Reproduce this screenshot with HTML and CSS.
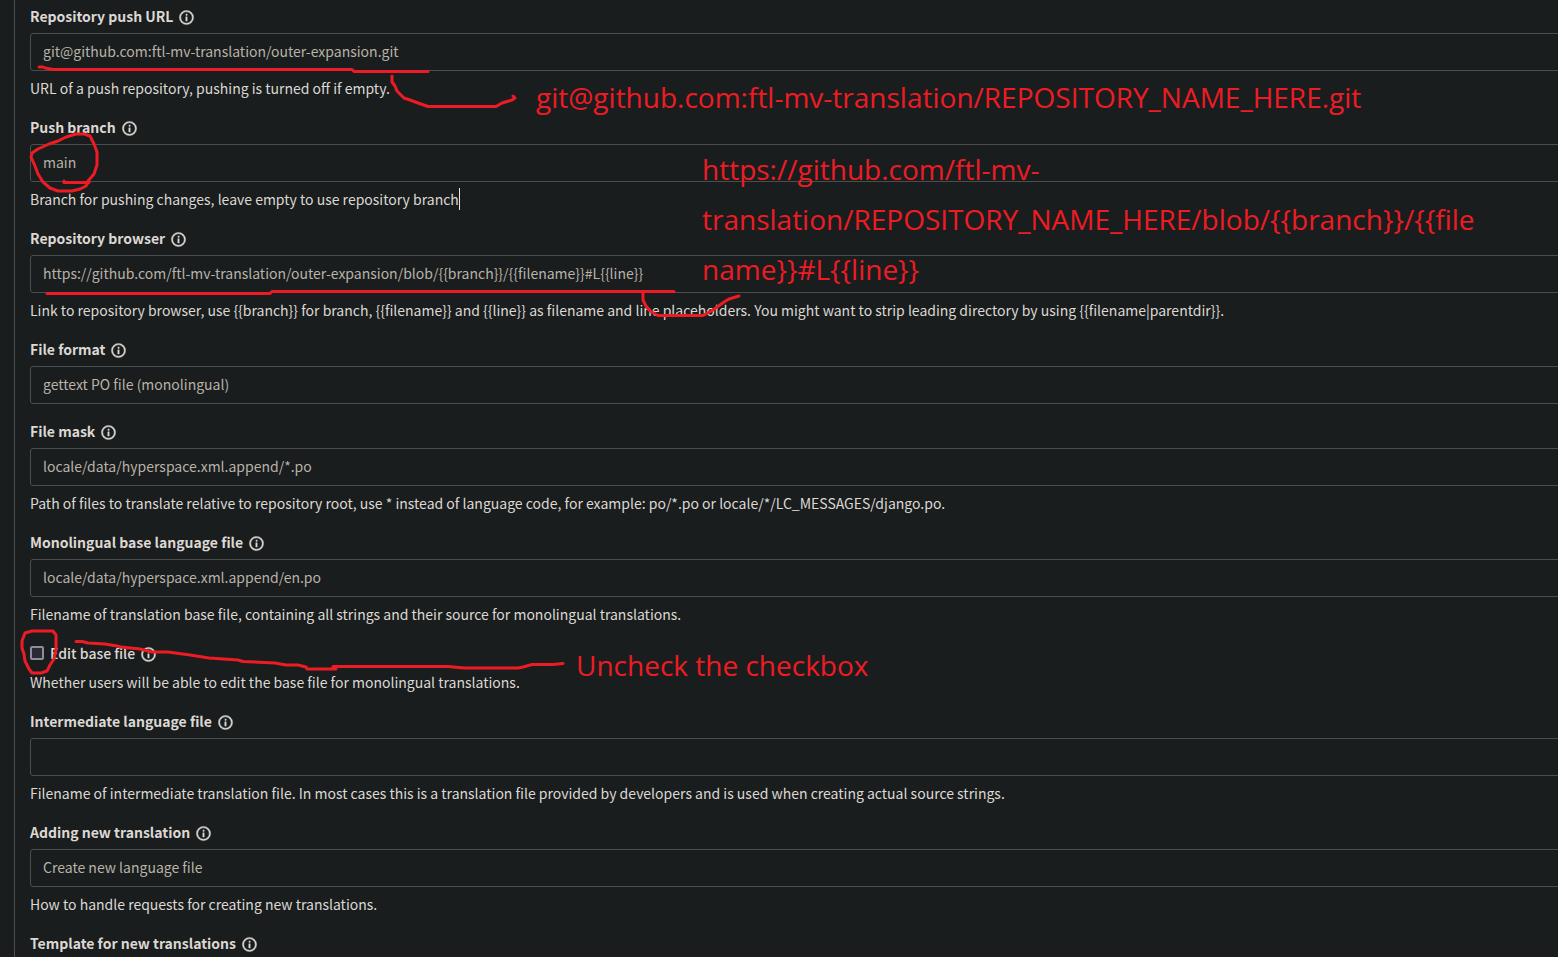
FILE: index.html
```html
<!DOCTYPE html>
<html lang="en">
<head>
<meta charset="utf-8">
<title>Component settings</title>
<link rel="stylesheet" href="styles.css">
</head>
<body>
<svg class="symbols" aria-hidden="true">
  <symbol id="info" viewBox="0 0 24 24"><path d="M11,9H13V7H11M12,20C7.59,20 4,16.41 4,12C4,7.59 7.59,4 12,4C16.41,4 20,7.59 20,12C20,16.41 16.41,20 12,20M12,2A10,10 0 0,0 2,12A10,10 0 0,0 12,22A10,10 0 0,0 22,12A10,10 0 0,0 12,2M11,17H13V11H11V17Z"/></symbol>
</svg>
<main class="page">
  <form class="panel">
    <div class="group">
      <div class="heading"><label for="push">Repository push URL</label><svg class="icon"><use href="#info"/></svg></div>
      <input class="control" id="push" type="text" value="git@github.com:ftl-mv-translation/outer-expansion.git">
      <p class="help">URL of a push repository, pushing is turned off if empty.</p>
    </div>
    <div class="group">
      <div class="heading"><label for="branch">Push branch</label><svg class="icon"><use href="#info"/></svg></div>
      <input class="control" id="branch" type="text" value="main">
      <p class="help caret">Branch for pushing changes, leave empty to use repository branch</p>
    </div>
    <div class="group">
      <div class="heading"><label for="browser">Repository browser</label><svg class="icon"><use href="#info"/></svg></div>
      <input class="control" id="browser" type="text" value="https://github.com/ftl-mv-translation/outer-expansion/blob/{{branch}}/{{filename}}#L{{line}}">
      <p class="help">Link to repository browser, use {{branch}} for branch, {{filename}} and {{line}} as filename and line placeholders. You might want to strip leading directory by using {{filename|parentdir}}.</p>
    </div>
    <div class="group">
      <div class="heading"><label for="format">File format</label><svg class="icon"><use href="#info"/></svg></div>
      <select class="control" id="format"><option>gettext PO file (monolingual)</option></select>
    </div>
    <div class="group">
      <div class="heading"><label for="mask">File mask</label><svg class="icon"><use href="#info"/></svg></div>
      <input class="control" id="mask" type="text" value="locale/data/hyperspace.xml.append/*.po">
      <p class="help">Path of files to translate relative to repository root, use * instead of language code, for example: po/*.po or locale/*/LC_MESSAGES/django.po.</p>
    </div>
    <div class="group">
      <div class="heading"><label for="base">Monolingual base language file</label><svg class="icon"><use href="#info"/></svg></div>
      <input class="control" id="base" type="text" value="locale/data/hyperspace.xml.append/en.po">
      <p class="help">Filename of translation base file, containing all strings and their source for monolingual translations.</p>
    </div>
    <div class="group">
      <div class="heading check"><input class="box" id="edit" type="checkbox"><label for="edit">Edit base file</label><svg class="icon"><use href="#info"/></svg></div>
      <p class="help">Whether users will be able to edit the base file for monolingual translations.</p>
    </div>
    <div class="group">
      <div class="heading"><label for="intermediate">Intermediate language file</label><svg class="icon"><use href="#info"/></svg></div>
      <input class="control" id="intermediate" type="text">
      <p class="help">Filename of intermediate translation file. In most cases this is a translation file provided by developers and is used when creating actual source strings.</p>
    </div>
    <div class="group">
      <div class="heading"><label for="adding">Adding new translation</label><svg class="icon"><use href="#info"/></svg></div>
      <select class="control" id="adding"><option>Create new language file</option></select>
      <p class="help">How to handle requests for creating new translations.</p>
    </div>
    <div class="group">
      <div class="heading"><span>Template for new translations</span><svg class="icon"><use href="#info"/></svg></div>
    </div>
  </form>

  <svg class="marks" viewBox="0 0 1558 957" aria-hidden="true">
    <path d="M39 67H43L45 68L53 69.500H352L354 71.500H428"/>
    <path d="M392 76V82L395 86L397 91L404 98L410 100L418 103L428 106.500H496L502 103L512 100L515 98L513 96"/>
    <path d="M64 181V182.500H89M88 181L94 174L97 165V152L94 144L90 136L84 134H76L66 137L58 141L49 144L38 149L32 153L31 157L35 166L38 174L43 182L50 188L58 191H72L80 189L86 186L89 181"/>
    <path d="M47 293.500H270L272 291.500H674"/>
    <path d="M643 292V300L646 306L650 311L658 315.500H703L713 310L724 302L729 299L739 296"/>
    <path d="M25 633L32 631H53L56 635V650L54 659L50 665L47 671L41 673H32L29 669L25 661L24 654L22 648V641L25 633"/>
    <path d="M76 641.500H82L88 643L105 644L117 646L121 647L140 649L152 652H168L190 655L209 658L238 660L243 661.500L275 663L286 665H298L306 667L307 669H336M333 666.500H448L464 668H518L523 667L532 664.500H553L563 663.500"/>
  </svg>
  <p class="note note-push">git@github.com:ftl-mv-translation/REPOSITORY_NAME_HERE.git</p>
  <p class="note note-browser">https://github.com/ftl-mv-<br>translation/REPOSITORY_NAME_HERE/blob/{{branch}}/{{file<br>name}}#L{{line}}</p>
  <p class="note note-check">Uncheck the checkbox</p>
</main>
</body>
</html>
```

FILE: styles.css
```css
* { box-sizing: border-box; }

body {
  margin: 0;
  background: #1a1d1e;
  color: #dcd8d3;
  font: 14px/24px "Noto Sans CJK SC", sans-serif;
}

.symbols { position: absolute; width: 0; height: 0; }

.page {
  position: relative;
  min-height: 100vh;
  padding-left: 14px;
  overflow: hidden;
}

.panel {
  min-height: 100vh;
  margin-right: -20px;
  padding: 4px 0 0 15px;
  border-left: 1px solid #4a4e4f;
}

.group {
  display: flex;
  flex-direction: column;
  gap: 5px;
  margin-bottom: 15px;
}

.group:last-child { margin-bottom: 0; }

.heading {
  display: flex;
  align-items: center;
  gap: 5px;
  height: 24px;
  font-weight: 700;
}

.icon {
  width: 17px;
  height: 17px;
  margin-top: 2px;
  fill: currentColor;
  stroke: currentColor;
  stroke-width: 0.6;
}

.control {
  width: 100%;
  height: 38px;
  margin: 0;
  padding: 0 12px 2px;
  border: 1px solid #4a4e4f;
  border-radius: 3px;
  background: transparent;
  color: #b8b2a8;
  font: inherit;
  appearance: none;
}

.help { margin: 0; }

.caret {
  display: flex;
  align-items: center;
}

.caret::after {
  content: "";
  height: 22px;
  border-left: 1px solid #e8e6e3;
}

.check { font-weight: 500; }

.box {
  width: 14px;
  height: 14px;
  margin: 0 1px 0 0;
  border: 2px solid #8f8d9c;
  border-radius: 2px;
  background: #2b2a33;
  appearance: none;
}

.marks {
  position: absolute;
  top: 0;
  left: 0;
  width: 1558px;
  height: 957px;
  fill: none;
  stroke: #ed1c24;
  stroke-width: 3;
  stroke-linecap: round;
  stroke-linejoin: round;
  pointer-events: none;
}

.note {
  position: absolute;
  margin: 0;
  color: #ed1c24;
  font: 28px/50px "Open Sans", sans-serif;
  white-space: nowrap;
  pointer-events: none;
}

.note-push { top: 72px; left: 536px; }
.note-browser { top: 144px; left: 702px; }
.note-check { top: 640px; left: 576px; }
```
